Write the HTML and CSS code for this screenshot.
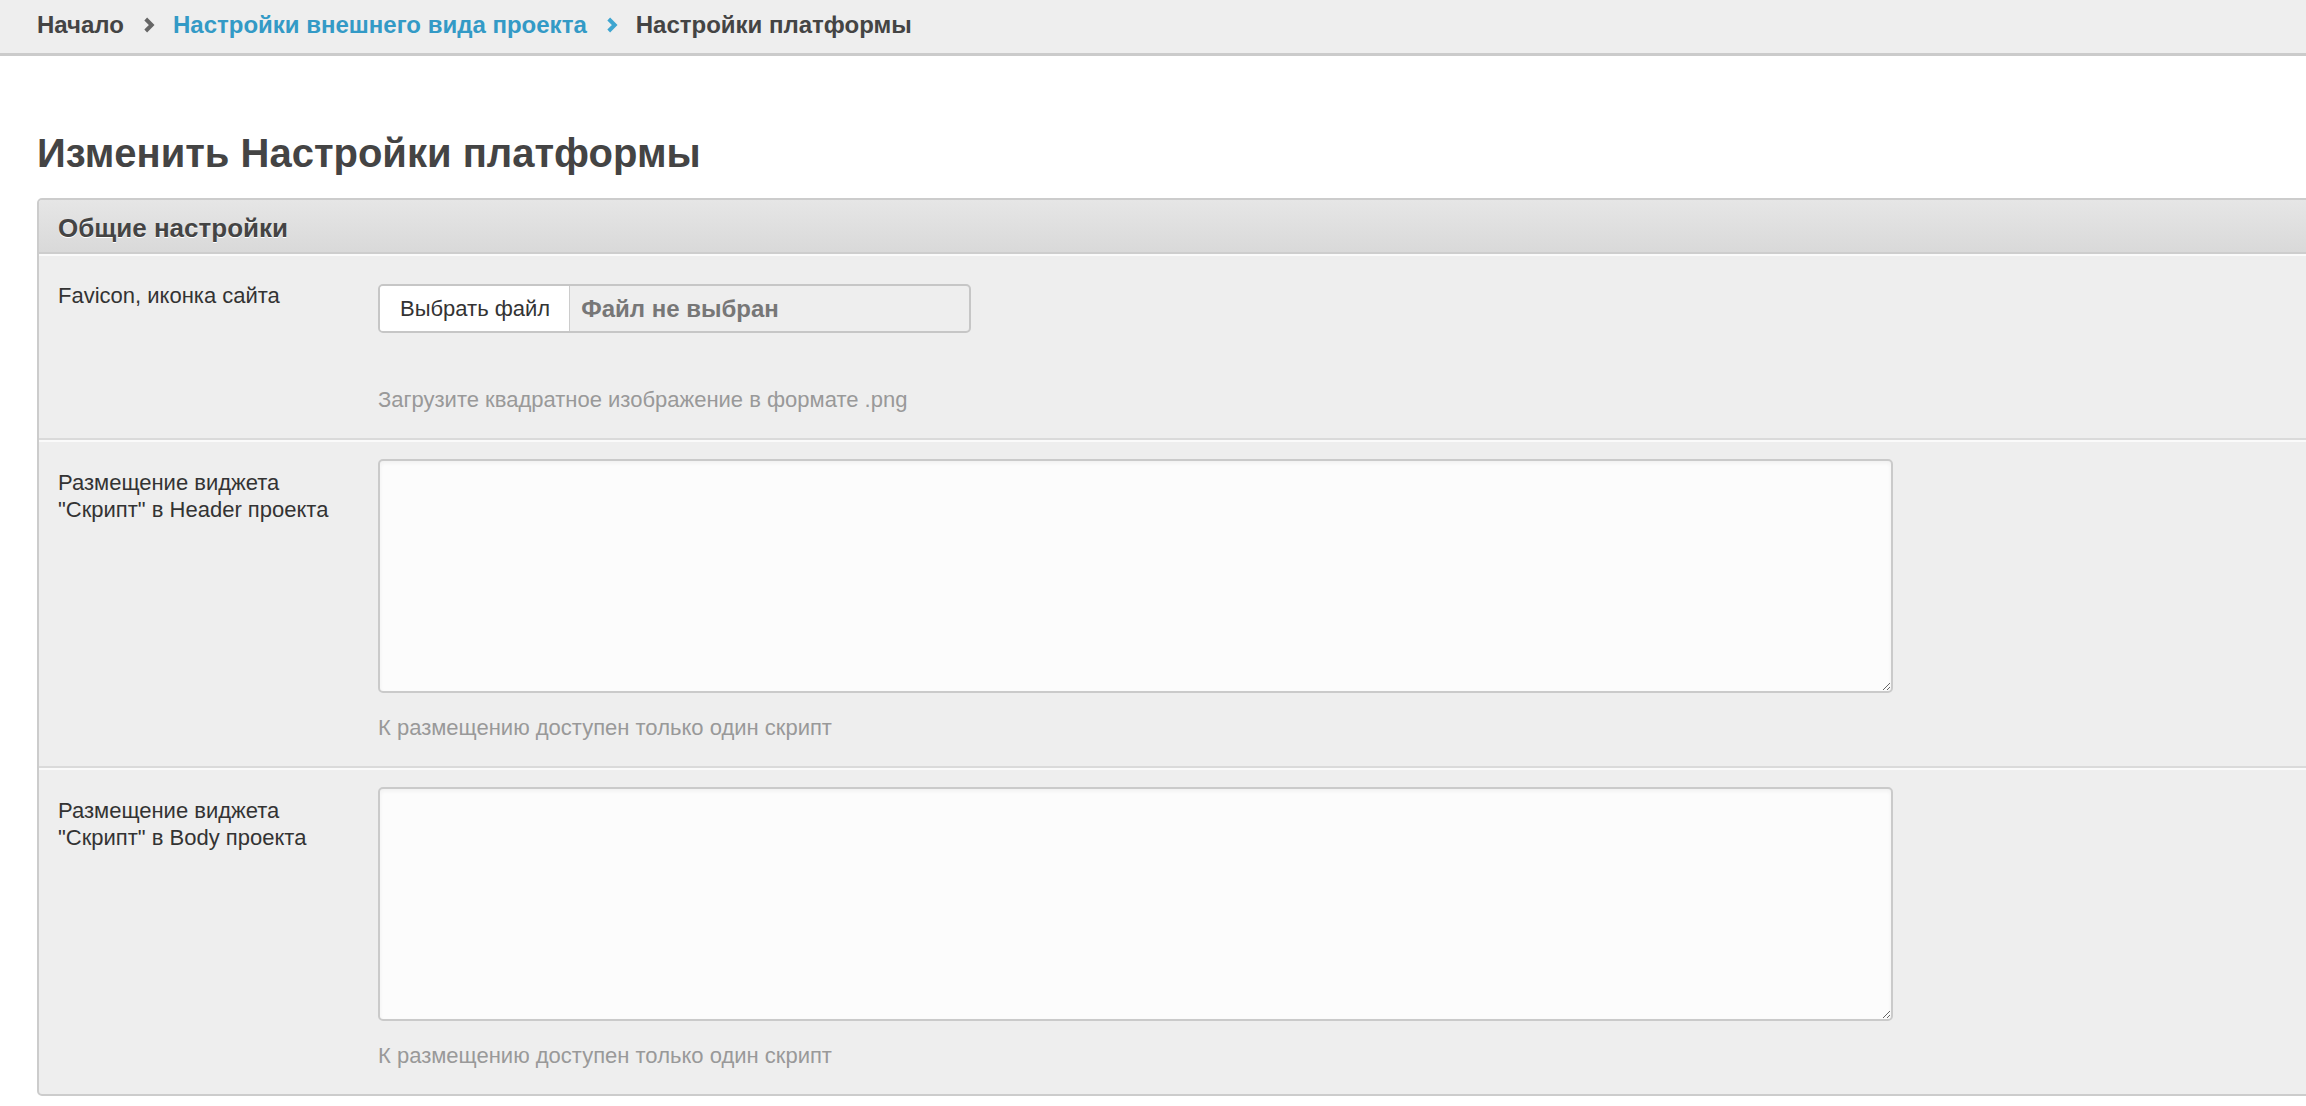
FILE: index.html
```html
<!DOCTYPE html>
<html lang="ru">
<head>
    <meta charset="UTF-8">
    <title>Изменить Настройки платформы</title>
    <link rel="stylesheet" href="styles.css">
</head>
<body>
    <div class="breadcrumbs">
        <a class="crumb crumb-home" href="#">Начало</a>
        <svg class="chevron" viewBox="0 0 11 14"><polyline points="2.5,1.5 8,7 2.5,12.5" /></svg>
        <a class="crumb crumb-link" href="#">Настройки внешнего вида проекта</a>
        <svg class="chevron chevron-blue" viewBox="0 0 11 14"><polyline points="2.5,1.5 8,7 2.5,12.5" /></svg>
        <span class="crumb crumb-current">Настройки платформы</span>
    </div>

    <div class="content">
        <h1 class="titulo">Изменить Настройки платформы</h1>

        <form class="painel" action="">
            <div class="painel-topo">Общие настройки</div>

            <div class="linha linha-arquivo">
                <label class="rotulo">Favicon, иконка сайта</label>
                <div class="campo">
                    <div class="arquivo">
                        <span class="arquivo-botao">Выбрать файл</span>
                        <span class="arquivo-nome">Файл не выбран</span>
                    </div>
                    <p class="dica">Загрузите квадратное изображение в формате .png</p>
                </div>
            </div>

            <div class="linha">
                <label class="rotulo">Размещение виджета<br>"Скрипт" в Header проекта</label>
                <div class="campo">
                    <textarea class="texto"></textarea>
                    <p class="dica">К размещению доступен только один скрипт</p>
                </div>
            </div>

            <div class="linha linha-ultima">
                <label class="rotulo">Размещение виджета<br>"Скрипт" в Body проекта</label>
                <div class="campo">
                    <textarea class="texto"></textarea>
                    <p class="dica">К размещению доступен только один скрипт</p>
                </div>
            </div>
        </form>
    </div>
</body>
</html>
```

FILE: styles.css
```css
html, body {
    overflow-x: hidden;
}

body {
    margin: 0;
    background-color: #fff;
    color: #333;
    font-family: "Liberation Sans", Arial, sans-serif;
}

.breadcrumbs {
    display: flex;
    align-items: center;
    height: 56px;
    padding: 1px 37px 5px;
    box-sizing: border-box;
    background-color: #eee;
    border-bottom: 3px solid #cbcbcb;
    font-size: 24px;
    font-weight: bold;
}

.crumb {
    text-decoration: none;
    line-height: 28px;
}

.crumb-home,
.crumb-current {
    color: #444;
}

.crumb-link {
    color: #339ac6;
}

.chevron {
    width: 12px;
    height: 16px;
    margin: 0 18px 0 19px;
    fill: none;
    stroke: #666;
    stroke-width: 3.6;
}

.chevron-blue {
    stroke: #3ea5d0;
}

.content {
    padding: 0 37px;
}

.titulo {
    margin: 74px 0 22px;
    font-size: 40px;
    line-height: 46px;
    color: #444;
}

/* painel ocupa até fora da tela, como no original */
.painel {
    margin-right: -60px;
    border: 2px solid #ccc;
    border-radius: 5px;
    background-color: #eee;
}

.painel-topo {
    height: 54px;
    padding: 13px 19px 0 19px;
    box-sizing: border-box;
    background: linear-gradient(#e6e6e6, #d9d9d9);
    border-bottom: 2px solid #cdcdcd;
    border-radius: 3px 3px 0 0;
    font-size: 26px;
    font-weight: bold;
    line-height: 30px;
    color: #444;
    text-shadow: 0 1px 0 #fff;
}

.linha {
    display: flex;
    padding: 17px 0 25px 19px;
    border-top: 2px solid #fafafa;
    border-bottom: 2px solid #dadada;
}

.linha-arquivo {
    padding-top: 28px;
}

.linha-ultima {
    border-bottom: none;
}

.rotulo {
    width: 320px;
    flex-shrink: 0;
    padding-top: 10px;
    font-size: 22px;
    line-height: 27px;
    color: #333;
}

.linha-arquivo .rotulo {
    padding-top: 0;
    margin-top: -2px;
}

.campo {
    display: flex;
    flex-direction: column;
}

.arquivo {
    display: flex;
    width: 593px;
    height: 49px;
    box-sizing: border-box;
    border: 2px solid #c6c6c6;
    border-radius: 5px;
    overflow: hidden;
    font-size: 22px;
}

.arquivo-botao {
    display: flex;
    align-items: center;
    padding: 0 19px 0 20px;
    background-color: #fff;
    border-right: 1px solid #ccc;
    color: #333;
}

.arquivo-nome {
    display: flex;
    align-items: center;
    padding-left: 11px;
    font-size: 24px;
    font-weight: bold;
    color: #777;
}

.dica {
    margin: 21px 0 0;
    font-size: 22px;
    line-height: 27px;
    color: #999;
}

.linha-arquivo .dica {
    margin-top: 53px;
}

.texto {
    display: block;
    width: 1515px;
    height: 234px;
    box-sizing: border-box;
    margin: 0;
    padding: 8px 10px;
    border: 2px solid #cacaca;
    border-radius: 5px;
    background-color: #fcfcfc;
    box-shadow: inset 0 2px 4px rgba(0, 0, 0, 0.05);
    font-family: "Liberation Sans", Arial, sans-serif;
    font-size: 22px;
    outline: none;
}
```
